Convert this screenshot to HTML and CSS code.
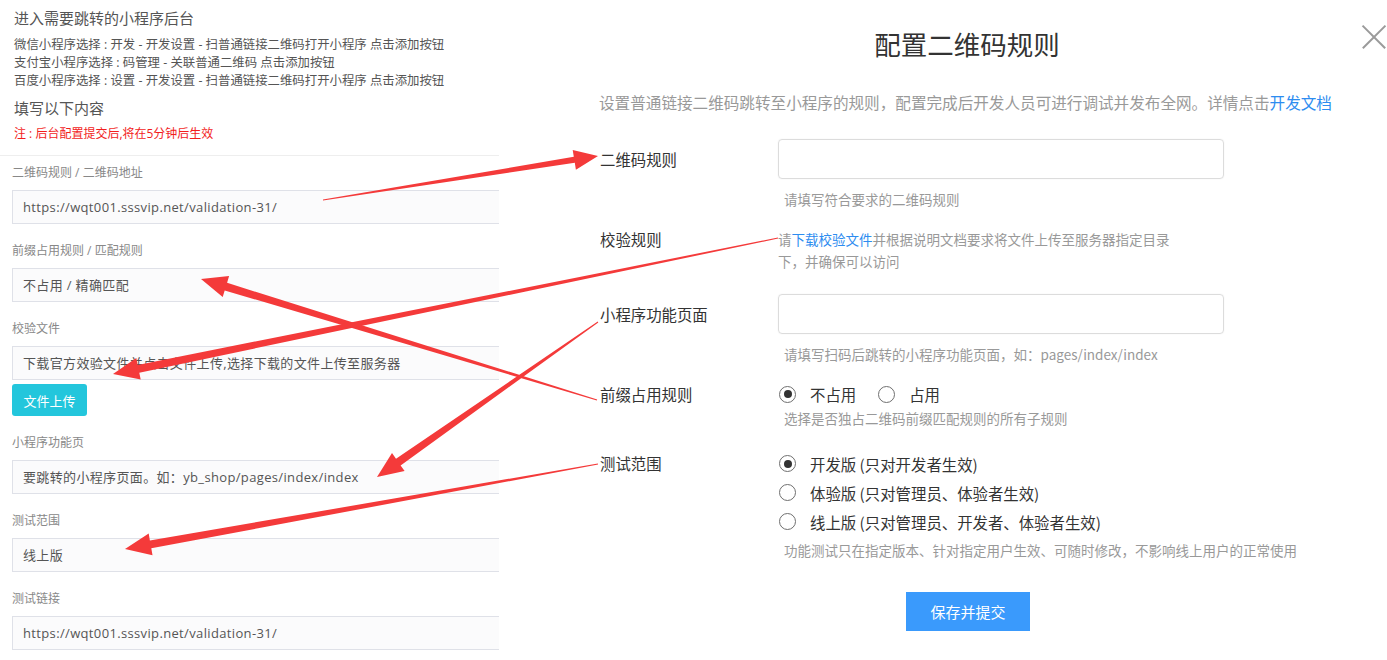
FILE: index.html
```html
<!DOCTYPE html>
<html lang="zh-CN">
<head>
<meta charset="utf-8">
<title>配置二维码规则</title>
<link rel="stylesheet" href="styles.css">
</head>
<body>
<div class="page">
  <section class="left">
    <div class="intro">
      <h2 class="intro-title">进入需要跳转的小程序后台</h2>
      <div class="intro-lines">
        <p>微信小程序选择 : 开发 - 开发设置 - 扫普通链接二维码打开小程序 点击添加按钮</p>
        <p>支付宝小程序选择 : 码管理 - 关联普通二维码 点击添加按钮</p>
        <p>百度小程序选择 : 设置 - 开发设置 - 扫普通链接二维码打开小程序 点击添加按钮</p>
      </div>
      <h3 class="fill-title">填写以下内容</h3>
      <p class="note">注 : 后台配置提交后,将在5分钟后生效</p>
    </div>
    <div class="fields">
      <div class="field">
        <div class="field-label">二维码规则 / 二维码地址</div>
        <div class="box">https://wqt001.sssvip.net/validation-31/</div>
      </div>
      <div class="field">
        <div class="field-label">前缀占用规则 / 匹配规则</div>
        <div class="box">不占用 / 精确匹配</div>
      </div>
      <div class="field">
        <div class="field-label">校验文件</div>
        <div class="box">下载官方效验文件并点击文件上传,选择下载的文件上传至服务器</div>
        <button class="upload">文件上传</button>
      </div>
      <div class="field">
        <div class="field-label">小程序功能页</div>
        <div class="box">要跳转的小程序页面。如：yb_shop/pages/index/index</div>
      </div>
      <div class="field">
        <div class="field-label">测试范围</div>
        <div class="box">线上版</div>
      </div>
      <div class="field">
        <div class="field-label">测试链接</div>
        <div class="box">https://wqt001.sssvip.net/validation-31/</div>
      </div>
    </div>
  </section>

  <section class="modal">
    <h1 class="modal-title">配置二维码规则</h1>
    <p class="desc">设置普通链接二维码跳转至小程序的规则，配置完成后开发人员可进行调试并发布全网。详情点击<span class="link">开发文档</span></p>
    <div class="form">
      <div class="row row-input">
        <div class="row-label">二维码规则</div>
        <div class="control">
          <div class="input"></div>
          <div class="hint hint-first">请填写符合要求的二维码规则</div>
        </div>
      </div>
      <div class="row row-verify">
        <div class="row-label">校验规则</div>
        <div class="control">
          <p class="verify-text">请<a class="link">下载校验文件</a>并根据说明文档要求将文件上传至服务器指定目录下，并确保可以访问</p>
        </div>
      </div>
      <div class="row row-input row-page">
        <div class="row-label">小程序功能页面</div>
        <div class="control">
          <div class="input"></div>
          <div class="hint hint-first">请填写扫码后跳转的小程序功能页面，如：pages/index/index</div>
        </div>
      </div>
      <div class="row row-prefix">
        <div class="row-label">前缀占用规则</div>
        <div class="control">
          <div class="radio-line">
            <span class="radio"><span class="dot checked"></span>不占用</span>
            <span class="radio"><span class="dot"></span>占用</span>
          </div>
          <div class="hint hint-tight">选择是否独占二维码前缀匹配规则的所有子规则</div>
        </div>
      </div>
      <div class="row row-scope">
        <div class="row-label">测试范围</div>
        <div class="control">
          <div class="radio-stack"><span class="radio"><span class="dot checked"></span>开发版 (只对开发者生效)</span></div>
          <div class="radio-stack"><span class="radio"><span class="dot"></span>体验版 (只对管理员、体验者生效)</span></div>
          <div class="radio-stack"><span class="radio"><span class="dot"></span>线上版 (只对管理员、开发者、体验者生效)</span></div>
          <div class="hint hint-scope">功能测试只在指定版本、针对指定用户生效、可随时修改，不影响线上用户的正常使用</div>
        </div>
      </div>
    </div>
    <div class="actions"><button class="save">保存并提交</button></div>
  </section>

  <span class="close" aria-label="关闭"></span>

  <svg class="arrows" viewBox="0 0 1387 660" width="1387" height="660">
    <polygon points="323,199.5 573.8,156.8 572.7,149.9 598,156 575.9,169.7 574.8,162.8 323,200.5"/>
    <polygon points="597.2,399.5 227.1,282.8 229.1,276.1 201,279 222.7,297.1 224.7,290.4 596.8,400.5"/>
    <polygon points="777.9,237.5 137.7,364.9 136.3,358 113,374 140.7,379.6 139.3,372.7 778.1,238.5"/>
    <polygon points="597.7,321.6 396,458.8 392,453.1 377,477 404.6,471.1 400.6,465.4 598.3,322.4"/>
    <polygon points="597.9,463.5 149.9,540.5 148.7,533.6 125,549 152.5,555.2 151.3,548.3 598.1,464.5"/>
  </svg>
</div>
</body>
</html>
```

FILE: styles.css
```css
body {
  margin: 0;
  background: #fff;
}

.page {
  position: relative;
  width: 1387px;
  height: 660px;
  display: flex;
  overflow: hidden;
  font-family: "Noto Sans CJK SC", sans-serif;
}

/* ---------- left panel ---------- */
.left {
  width: 499px;
  flex: none;
  overflow: hidden;
  font-family: "Open Sans", "Noto Sans CJK SC", sans-serif;
}

.intro {
  padding: 8px 0 0 14px;
}

.intro-title,
.fill-title {
  margin: 0;
  font-size: 15px;
  line-height: 20px;
  font-weight: normal;
  color: #555;
}

.intro-lines {
  margin-top: 8px;
}

.intro-lines p {
  margin: 0;
  font-size: 12.4px;
  line-height: 18px;
  color: #555;
  white-space: nowrap;
}

.fill-title {
  margin-top: 8px;
}

.note {
  margin: 7px 0 0;
  font-size: 12px;
  line-height: 18px;
  color: #f21d1d;
}

.fields {
  margin-top: 12px;
  border-top: 1px solid #eeeeee;
  padding: 8px 0 0 12px;
}

.field + .field {
  margin-top: 18px;
}

.field-label {
  font-size: 12px;
  line-height: 18px;
  color: #888;
}

.box {
  margin-top: 8px;
  width: 520px;
  height: 34px;
  box-sizing: border-box;
  border: 1px solid #dfe1e8;
  background: #fbfbfc;
  padding-left: 10px;
  font-size: 13px;
  letter-spacing: 0.35px;
  line-height: 32px;
  color: #555;
  white-space: nowrap;
}

.upload {
  display: block;
  margin-top: 4px;
  width: 75px;
  height: 32px;
  border: none;
  border-radius: 3px;
  background: #23c6dc;
  color: #fff;
  font-family: "Open Sans", "Noto Sans CJK SC", sans-serif;
  font-size: 13px;
  padding: 0;
}

/* ---------- right modal ---------- */
.modal {
  margin-left: 81px;
  width: 774px;
  flex: none;
  padding-top: 26px;
  box-sizing: border-box;
}

.modal-title {
  margin: 0;
  text-align: center;
  font-size: 26.5px;
  line-height: 36px;
  font-weight: normal;
  color: #333;
}

.desc {
  margin: 30px 0 0 19px;
  font-size: 15.6px;
  line-height: 20px;
  color: #999;
  white-space: nowrap;
}

.link {
  color: #2d8cf0;
}

.form {
  margin-left: 20px;
}

.row {
  display: grid;
  grid-template-columns: 178px 1fr;
}

.row-label {
  font-size: 15.4px;
  color: #333;
  line-height: 22px;
}

.row-input {
  margin-top: 27px;
}

.row-input .row-label {
  line-height: 40px;
}

.input {
  width: 446px;
  height: 40px;
  box-sizing: border-box;
  border: 1px solid #dcdcdc;
  border-radius: 4px;
  box-shadow: 0 0 2px rgba(0, 0, 0, 0.06);
}

.hint {
  padding-left: 6px;
  font-size: 13.5px;
  line-height: 20px;
  color: #999;
  white-space: nowrap;
}

.hint-first {
  margin-top: 10px;
}

.row-verify {
  margin-top: 19px;
}

.verify-text {
  margin: 0;
  max-width: 398px;
  font-size: 13.5px;
  line-height: 22px;
  color: #999;
}

.row-page {
  margin-top: 22px;
}

.row-prefix {
  margin-top: 19px;
}

.radio-line {
  display: flex;
  gap: 22px;
  height: 22px;
  align-items: center;
  padding-left: 1px;
}

.radio {
  display: inline-flex;
  align-items: center;
  font-size: 15.4px;
  color: #333;
}

.dot {
  position: relative;
  width: 17px;
  height: 17px;
  box-sizing: border-box;
  border: 1.3px solid #6f6f6f;
  border-radius: 50%;
  margin-right: 14px;
}

.dot.checked::after {
  content: "";
  position: absolute;
  left: 50%;
  top: 50%;
  width: 8px;
  height: 8px;
  margin: -4px 0 0 -4px;
  border-radius: 50%;
  background: #333;
}

.hint-tight {
  margin-top: 3px;
}

.row-scope {
  margin-top: 21px;
}

.row-scope .row-label {
  line-height: 29px;
}

.radio-stack {
  height: 29px;
  display: flex;
  align-items: center;
  padding-left: 1px;
}

.hint-scope {
  margin-top: 4px;
}

.actions {
  margin-top: 32px;
  text-align: center;
}

.save {
  width: 124px;
  height: 39px;
  border: none;
  background: #3a9afc;
  color: #fff;
  font-family: "Noto Sans CJK SC", sans-serif;
  font-size: 15px;
  padding: 0;
  margin-left: 2px;
}

/* close icon */
.close {
  position: absolute;
  left: 1362px;
  top: 25px;
  width: 24px;
  height: 24px;
}

.close::before,
.close::after {
  content: "";
  position: absolute;
  left: -4px;
  top: 11px;
  width: 32px;
  height: 1.6px;
  background: #9a9a9a;
  transform: rotate(45deg);
}

.close::after {
  transform: rotate(-45deg);
}

/* annotation arrows */
.arrows {
  position: absolute;
  left: 0;
  top: 0;
  pointer-events: none;
}

.arrows polygon {
  fill: #f43a3a;
}
```
